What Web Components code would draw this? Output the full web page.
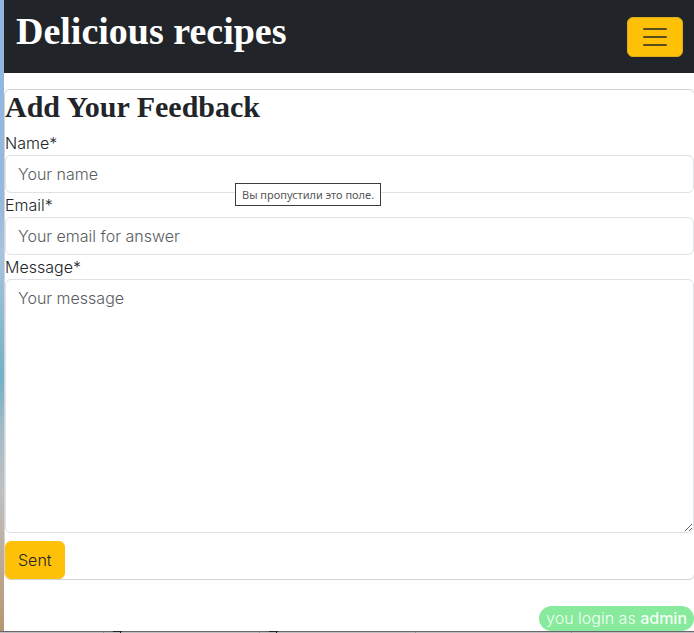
<!DOCTYPE html>
<html lang="en">
<head>
<meta charset="utf-8">
<meta name="viewport" content="width=device-width, initial-scale=1">
<title>Delicious recipes</title>
<style>
  html, body { margin: 0; }
  body { font: 300 16px/24px Inter, "Liberation Sans", sans-serif; color: #212529; background: #fff; }
</style>
</head>
<body>
<recipe-page>
  <site-header slot="header">Delicious recipes</site-header>
  <feedback-card>
    <span slot="title">Add Your Feedback</span>
    <form-field label="Name*" placeholder="Your name" hint="Вы пропустили это поле."></form-field>
    <form-field label="Email*" placeholder="Your email for answer" type="email"></form-field>
    <form-field label="Message*" placeholder="Your message" rows="10"></form-field>
    <span slot="action">Sent</span>
  </feedback-card>
  <login-badge slot="status">you login as <b>admin</b></login-badge>
</recipe-page>
<script>
class BaseElement extends HTMLElement {
  render(html) {
    const template = document.createElement('template');
    template.innerHTML = '<style>*{box-sizing:border-box}</style>' + html;
    this.attachShadow({ mode: 'open' }).append(template.content.cloneNode(true));
  }
}

customElements.define('recipe-page', class extends BaseElement {
  connectedCallback() {
    this.render(`<style>
      :host { display: grid; grid-template-columns: 4px minmax(0, 1fr); grid-template-rows: 1fr auto; min-height: 100vh; overflow-x: clip; }
      .photo { background: linear-gradient(#8fb6df 0%, #96b8dd 32%, #a9c2de 40%, #8dbad2 50%, #74b1c6 60%, #a3bbc6 68%, #c0c0c2 78%, #bba994 90%, #b59770 100%); }
      .page { display: flex; flex-direction: column; min-width: 0; }
      main { padding-top: 16px; flex: 1; }
      .status { display: flex; justify-content: flex-end; }
      .edge { grid-column: 1 / -1; height: 2px; background: #c0bdc0; border-top: 1px solid #6b686c; }
      .edge svg { display: block; margin-top: -1px; }
    </style>
    <div class="photo"></div>
    <div class="page">
      <slot name="header"></slot>
      <main><slot></slot></main>
      <div class="status"><slot name="status"></slot></div>
    </div>
    <div class="edge">
      <svg width="600" height="2" viewBox="0 0 600 2" aria-hidden="true"><path fill="#25222c" d="M113 0h9v1h-1v1h-1v-1h-7zM269 0h9v1h-1v1h-1v-1h-7z"/><path fill="#9a979b" d="M103 1h1v1h-1zM259 1h1v1h-1zM415 1h1v1h-1zM571 1h1v1h-1z"/></svg>
    </div>`);
  }
});

customElements.define('site-header', class extends BaseElement {
  connectedCallback() {
    this.render(`<style>
      :host { display: block; background: #212529; }
      header { display: flex; justify-content: space-between; align-items: center; padding: 8px 11px 8px 12px; min-height: 73px; }
      a { color: #fff; text-decoration: none; font: bold 38px/44px "Liberation Serif", serif; padding-bottom: 12px; }
      button { width: 56px; height: 40px; padding: 0; display: grid; place-items: center; background: #ffc107; border: 1px solid #dfac1b; border-radius: 6px; }
    </style>
    <header>
      <a href="#"><slot></slot></a>
      <button type="button" aria-label="Toggle navigation">
        <svg width="30" height="30" viewBox="0 0 30 30" fill="none" stroke="#212529" stroke-opacity=".75" stroke-width="2" stroke-linecap="round"><path d="M4 7h22M4 15h22M4 23h22"/></svg>
      </button>
    </header>`);
  }
});

customElements.define('feedback-card', class extends BaseElement {
  connectedCallback() {
    this.render(`<style>
      :host { display: block; margin-right: -1px; border: 1px solid #d3d4d5; border-radius: 6px; background: #fff; }
      h2 { margin: 0 0 8px; font: bold 30px/33px "Liberation Serif", serif; }
      button { display: block; margin-top: 8px; height: 38px; padding: 0 12px; border: 1px solid #ffc107; border-radius: 6px; background: #ffc107; color: #212529; font: inherit; }
    </style>
    <h2><slot name="title"></slot></h2>
    <form novalidate>
      <slot></slot>
      <button type="button"><slot name="action"></slot></button>
    </form>`);
  }
});

customElements.define('form-field', class extends BaseElement {
  connectedCallback() {
    const label = this.getAttribute('label');
    const placeholder = this.getAttribute('placeholder');
    const rows = this.getAttribute('rows');
    const hint = this.getAttribute('hint');
    const control = rows
      ? `<textarea id="control" rows="${rows}" placeholder="${placeholder}"></textarea>`
      : `<input id="control" type="${this.getAttribute('type') || 'text'}" placeholder="${placeholder}">`;
    this.render(`<style>
      :host { display: block; position: relative; }
      label { display: block; }
      input, textarea { display: block; width: 100%; margin: 0; padding: 6px 12px; border: 1px solid #dee2e6; border-radius: 6px; background: #fff; color: #212529; font: inherit; }
      input { height: 38px; }
      textarea { resize: vertical; }
      ::placeholder { color: #595c5f; opacity: 1; }
      [role=tooltip] { position: absolute; z-index: 1; top: 52px; left: 230px; padding: 3px 6px; border: 1px solid #3c3c3c; background: #fff; color: #575757; font: 400 11px/15px "Noto Sans", "Open Sans", sans-serif; white-space: nowrap; }
    </style>
    <label for="control">${label}</label>
    ${control}
    ${hint ? `<div role="tooltip" lang="ru">${hint}</div>` : ''}`);
  }
});

customElements.define('login-badge', class extends BaseElement {
  connectedCallback() {
    this.render(`<style>
      :host { display: block; padding: 0 7px; border-radius: 13px; background: #87ea9c; color: #f3fff5; font-weight: 300; line-height: 25px; }
      ::slotted(b) { font-weight: 500; }
    </style><slot></slot>`);
  }
});
</script>
</body>
</html>
